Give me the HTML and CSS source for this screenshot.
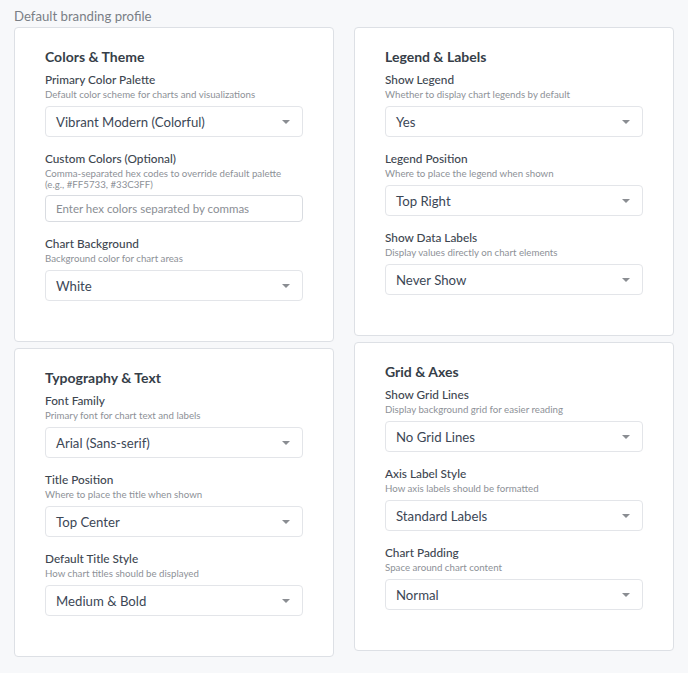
FILE: index.html
```html
<!DOCTYPE html>
<html lang="en">
<head>
<meta charset="utf-8">
<title>Default branding profile</title>
<link rel="stylesheet" href="styles.css">
</head>
<body>
<div class="page">
  <div class="page-title">Default branding profile</div>
  <div class="columns">
    <div class="column">
      <section class="card">
        <h2 class="card-title">Colors &amp; Theme</h2>
        <div class="field">
          <div class="label">Primary Color Palette</div>
          <div class="desc">Default color scheme for charts and visualizations</div>
          <div class="select"><span>Vibrant Modern (Colorful)</span><i class="caret"></i></div>
        </div>
        <div class="field">
          <div class="label">Custom Colors (Optional)</div>
          <div class="desc desc-multi">Comma-separated hex codes to override default palette<br>(e.g., #FF5733, #33C3FF)</div>
          <div class="input">Enter hex colors separated by commas</div>
        </div>
        <div class="field">
          <div class="label">Chart Background</div>
          <div class="desc">Background color for chart areas</div>
          <div class="select"><span>White</span><i class="caret"></i></div>
        </div>
      </section>
      <section class="card">
        <h2 class="card-title">Typography &amp; Text</h2>
        <div class="field">
          <div class="label">Font Family</div>
          <div class="desc">Primary font for chart text and labels</div>
          <div class="select"><span>Arial (Sans-serif)</span><i class="caret"></i></div>
        </div>
        <div class="field">
          <div class="label">Title Position</div>
          <div class="desc">Where to place the title when shown</div>
          <div class="select"><span>Top Center</span><i class="caret"></i></div>
        </div>
        <div class="field">
          <div class="label">Default Title Style</div>
          <div class="desc">How chart titles should be displayed</div>
          <div class="select"><span>Medium &amp; Bold</span><i class="caret"></i></div>
        </div>
      </section>
    </div>
    <div class="column">
      <section class="card">
        <h2 class="card-title">Legend &amp; Labels</h2>
        <div class="field">
          <div class="label">Show Legend</div>
          <div class="desc">Whether to display chart legends by default</div>
          <div class="select"><span>Yes</span><i class="caret"></i></div>
        </div>
        <div class="field">
          <div class="label">Legend Position</div>
          <div class="desc">Where to place the legend when shown</div>
          <div class="select"><span>Top Right</span><i class="caret"></i></div>
        </div>
        <div class="field">
          <div class="label">Show Data Labels</div>
          <div class="desc">Display values directly on chart elements</div>
          <div class="select"><span>Never Show</span><i class="caret"></i></div>
        </div>
      </section>
      <section class="card">
        <h2 class="card-title">Grid &amp; Axes</h2>
        <div class="field">
          <div class="label">Show Grid Lines</div>
          <div class="desc">Display background grid for easier reading</div>
          <div class="select"><span>No Grid Lines</span><i class="caret"></i></div>
        </div>
        <div class="field">
          <div class="label">Axis Label Style</div>
          <div class="desc">How axis labels should be formatted</div>
          <div class="select"><span>Standard Labels</span><i class="caret"></i></div>
        </div>
        <div class="field">
          <div class="label">Chart Padding</div>
          <div class="desc">Space around chart content</div>
          <div class="select"><span>Normal</span><i class="caret"></i></div>
        </div>
      </section>
    </div>
  </div>
</div>
</body>
</html>
```

FILE: styles.css
```css
html, body {
  margin: 0;
  padding: 0;
  background: #f7f8fa;
}

body {
  font-family: Lato, "Noto Sans", "Liberation Sans", sans-serif;
  color: #343d48;
}

.page {
  padding: 7px 14px 14px 14px;
}

.page-title {
  font-size: 13.2px;
  line-height: 18px;
  color: #7a7f86;
  margin-bottom: 2px;
}

.columns {
  display: grid;
  grid-template-columns: 1fr 1fr;
  column-gap: 20px;
  align-items: start;
}

.column {
  display: flex;
  flex-direction: column;
  gap: 6px;
}

.card {
  background: #ffffff;
  border: 1px solid #dde0e5;
  border-radius: 4px;
  padding: 19px 30px 40px 30px;
}

.card-title {
  margin: 0 0 5px 0;
  font-size: 14px;
  line-height: 20px;
  font-weight: 700;
  color: #363e48;
}

.field + .field {
  margin-top: 14px;
}

.label {
  font-size: 11.8px;
  line-height: 16px;
  font-weight: 500;
  color: #3d4650;
  margin-bottom: 1px;
}

.desc {
  font-size: 9.7px;
  line-height: 11px;
  color: #8d9197;
  margin-bottom: 6px;
}

.desc-multi {
  line-height: 11px;
  margin-bottom: 5px;
}

.select {
  height: 31px;
  box-sizing: border-box;
  border: 1px solid #e3e5e9;
  border-radius: 4px;
  background: #ffffff;
  display: flex;
  align-items: center;
  justify-content: space-between;
  padding: 0 12px 0 10px;
  font-size: 13.2px;
  color: #3c4756;
}

.caret {
  width: 0;
  height: 0;
  border-left: 4px solid transparent;
  border-right: 4px solid transparent;
  border-top: 4px solid #8a8d92;
}

.input {
  height: 27px;
  box-sizing: border-box;
  border: 1px solid #d9dce1;
  border-radius: 4px;
  background: #ffffff;
  display: flex;
  align-items: center;
  padding: 0 10px;
  font-size: 11.5px;
  color: #8a8e94;
}
```
